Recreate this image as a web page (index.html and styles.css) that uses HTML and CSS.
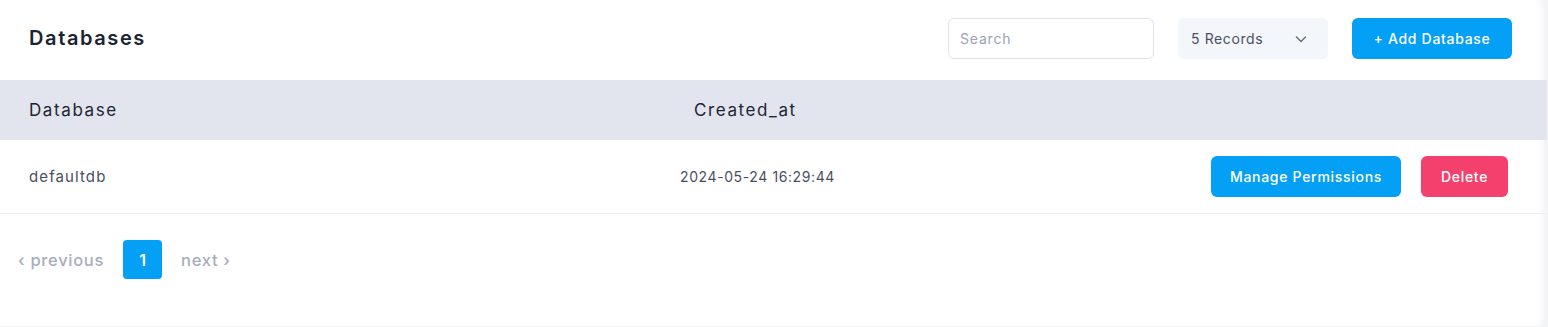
FILE: index.html
```html
<!DOCTYPE html>
<html lang="en">
<head>
<meta charset="utf-8">
<title>Databases</title>
<link rel="stylesheet" href="styles.css">
</head>
<body>
<div class="card">
  <div class="toolbar">
    <h2 class="title">Databases</h2>
    <div class="controls">
      <input class="search" type="text" placeholder="Search">
      <div class="select">
        <span>5 Records</span>
        <svg class="chev" width="14" height="14" viewBox="0 0 14 14"><path d="M2.5 5 L7 9.5 L11.5 5" fill="none" stroke="#6b7280" stroke-width="1.5" stroke-linecap="round" stroke-linejoin="round"/></svg>
      </div>
      <button class="btn btn-blue btn-add">+ Add Database</button>
    </div>
  </div>
  <div class="table">
    <div class="thead">
      <div class="th col-name">Database</div>
      <div class="th col-date">Created_at</div>
      <div class="th col-actions"></div>
    </div>
    <div class="tr">
      <div class="td col-name">defaultdb</div>
      <div class="td col-date date">2024-05-24 16:29:44</div>
      <div class="td col-actions actions">
        <button class="btn btn-blue btn-row">Manage Permissions</button>
        <button class="btn btn-red btn-row btn-del">Delete</button>
      </div>
    </div>
  </div>
  <div class="pagination">
    <span class="pg-link">&lsaquo; previous</span>
    <span class="pg-num">1</span>
    <span class="pg-link">next &rsaquo;</span>
  </div>
</div>
</body>
</html>
```
FILE: styles.css
```css
* { box-sizing: border-box; }
html, body { margin: 0; padding: 0; background: #f3f4f6; }
body {
  font-family: "Inter", "Noto Sans", sans-serif;
  color: #1c2434;
  width: 1548px;
  height: 327px;
  overflow: hidden;
}
.card {
  width: 1547px;
  height: 326px;
  background: #fff;
  border-radius: 0 8px 8px 0;
  box-shadow: inset -12px 0 10px -10px rgba(0,0,0,0.08);
}
.toolbar {
  height: 80px;
  display: flex;
  align-items: flex-start;
  justify-content: space-between;
  padding: 18px 35px 0 29px;
}
.title {
  margin: 0;
  line-height: 41px;
  font-size: 20px;
  font-weight: 600;
  color: #1c2434;
  letter-spacing: 1.6px;
}
.controls {
  display: flex;
  align-items: center;
  gap: 24px;
}
.search {
  width: 206px;
  height: 41px;
  border: 1px solid #e2e1ef;
  border-radius: 6px;
  padding: 0 11px;
  font-family: inherit;
  font-size: 14px;
  letter-spacing: 0.8px;
  color: #1c2434;
  outline: none;
}
.search::placeholder { color: #9ca3b8; }
.select {
  width: 150px;
  height: 41px;
  background: #f3f6fa;
  border-radius: 6px;
  display: flex;
  align-items: center;
  justify-content: space-between;
  padding: 0 20px 0 13px;
  font-size: 14px;
  letter-spacing: 0.6px;
  color: #4b5065;
}
.chev { display: block; }
.btn {
  border: none;
  border-radius: 6px;
  color: #fff;
  font-family: inherit;
  font-weight: 500;
  font-size: 14px;
  letter-spacing: 0.7px;
  cursor: pointer;
}
.btn-blue { background: #03a0f5; }
.btn-red { background: #f4406c; }
.btn-add { width: 160px; height: 41px; }
.thead {
  display: flex;
  height: 60px;
  background: #e2e5ee;
  align-items: center;
}
.th {
  font-size: 17px;
  font-weight: 400;
  letter-spacing: 1.6px;
  color: #1c2434;
}
.col-name { width: 665px; padding-left: 29px; }
.col-date { width: 460px; }
.thead .col-date { padding-left: 29px; }
.tr .col-date { padding-left: 15px; }
.col-actions { flex: 1; }
.tr {
  display: flex;
  height: 74px;
  align-items: center;
  border-bottom: 1px solid #ebebf0;
}
.td {
  font-size: 15px;
  letter-spacing: 1.1px;
  color: #4a4f63;
}
.date { font-size: 14px; letter-spacing: 0.6px; }
.actions {
  display: flex;
  justify-content: flex-end;
  gap: 20px;
  padding-right: 39px;
}
.btn-row { height: 41px; padding: 0 19px; }
.btn-del { width: 87px; padding: 0; }
.pagination {
  display: flex;
  align-items: center;
  gap: 19px;
  padding: 26px 0 0 18px;
}
.pg-link {
  font-size: 16.5px;
  letter-spacing: 0.7px;
  color: #a8adbd;
  font-weight: 500;
}
.pg-num {
  width: 39px;
  height: 39px;
  border-radius: 4px;
  background: #03a0f5;
  color: #fff;
  display: flex;
  align-items: center;
  justify-content: center;
  font-weight: 600;
  font-size: 16px;
}
```
